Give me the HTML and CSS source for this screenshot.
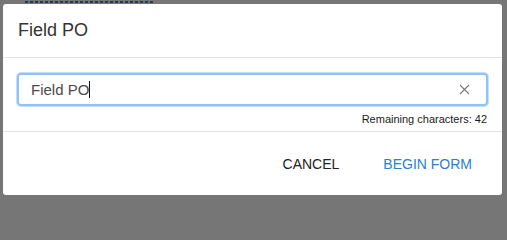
FILE: index.html
```html
<!DOCTYPE html>
<html>
<head>
<meta charset="utf-8">
<link rel="stylesheet" href="styles.css">
</head>
<body>
<div class="backdrop">
  <div class="behind"><span class="behind-line"></span></div>
  <div class="dialog">
    <div class="dialog-header">Field PO</div>
    <div class="dialog-body">
      <div class="input-wrap">
        <span class="input-text">Field PO</span><span class="caret"></span>
        <svg class="clear" width="11" height="11" viewBox="0 0 11 11">
          <path d="M1 1 L10 10 M10 1 L1 10" stroke="#7a7a7a" stroke-width="1.1" fill="none"/>
        </svg>
      </div>
      <div class="remaining">Remaining characters: 42</div>
    </div>
    <div class="dialog-footer">
      <button class="btn btn-cancel">CANCEL</button>
      <button class="btn btn-primary">BEGIN FORM</button>
    </div>
  </div>
</div>
</body>
</html>
```

FILE: styles.css
```css
html, body {
  margin: 0;
  padding: 0;
  background: #767676;
}
body {
  width: 507px;
  height: 200px;
  overflow: hidden;
  font-family: "Liberation Sans", Arial, sans-serif;
}
.backdrop {
  padding: 0 5px 6px 3px;
}
.behind {
  height: 4px;
  overflow: hidden;
  padding-left: 22px;
}
.behind-line {
  display: block;
  width: 128px;
  height: 2px;
  margin-top: 1px;
  background: repeating-linear-gradient(90deg, #2a3550 0 3px, #6e7382 3px 5px);
}
.dialog {
  background: #fff;
  width: 499px;
  height: 191px;
  border-radius: 3px;
  display: flex;
  flex-direction: column;
}
.dialog-header {
  height: 54px;
  box-sizing: border-box;
  padding: 0 15px;
  display: flex;
  align-items: center;
  font-size: 18px;
  color: #333;
  border-bottom: 1px solid #e2e2e2;
}
.dialog-body {
  padding: 15px 14px 0 14px;
  height: 74px;
  box-sizing: border-box;
  border-bottom: 1px solid #e2e2e2;
}
.input-wrap {
  height: 33px;
  box-sizing: border-box;
  border: 2px solid #8ec2f8;
  box-shadow: 0 0 0 1px #c4dffb;
  border-radius: 4px;
  display: flex;
  align-items: center;
  padding: 0 16px 0 12px;
}
.input-text {
  font-size: 15px;
  color: #4a4a4a;
}
.caret {
  width: 1px;
  height: 17px;
  background: #111;
}
.clear {
  margin-left: auto;
  margin-right: 0;
}
.remaining {
  text-align: right;
  font-size: 11px;
  color: #1a1a1a;
  margin-top: 7px;
  padding-right: 1px;
}
.dialog-footer {
  flex: 1;
  display: flex;
  justify-content: flex-end;
  align-items: center;
  padding: 0 14px 0 0;
  gap: 12px;
}
.btn {
  background: none;
  border: none;
  font-family: "Liberation Sans", Arial, sans-serif;
  font-size: 14px;
  padding: 8px 16px;
  cursor: pointer;
}
.btn-cancel {
  color: #222;
}
.btn-primary {
  color: #2a7fd4;
}
```
